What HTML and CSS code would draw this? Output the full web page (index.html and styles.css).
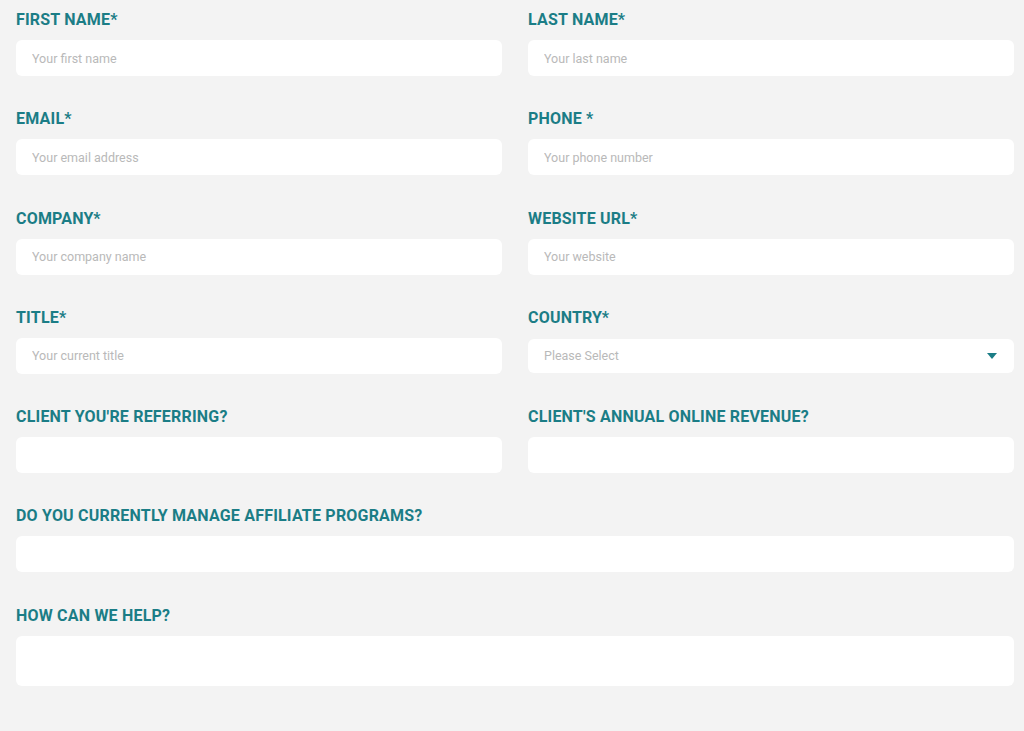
FILE: index.html
```html
<!DOCTYPE html>
<html lang="en">
<head>
    <meta charset="UTF-8">
    <title>Referral Form</title>
    <link rel="stylesheet" href="styles.css">
</head>
<body>
    <form class="referral-form">
        <div class="field">
            <label for="firstName">FIRST NAME*</label>
            <input type="text" id="firstName" placeholder="Your first name">
        </div>
        <div class="field">
            <label for="lastName">LAST NAME*</label>
            <input type="text" id="lastName" placeholder="Your last name">
        </div>
        <div class="field">
            <label for="email">EMAIL*</label>
            <input type="email" id="email" placeholder="Your email address">
        </div>
        <div class="field">
            <label for="phone">PHONE *</label>
            <input type="tel" id="phone" placeholder="Your phone number">
        </div>
        <div class="field">
            <label for="company">COMPANY*</label>
            <input type="text" id="company" placeholder="Your company name">
        </div>
        <div class="field">
            <label for="website">WEBSITE URL*</label>
            <input type="text" id="website" placeholder="Your website">
        </div>
        <div class="field">
            <label for="title">TITLE*</label>
            <input type="text" id="title" placeholder="Your current title">
        </div>
        <div class="field">
            <label for="country">COUNTRY*</label>
            <div class="select-wrap">
                <select id="country">
                    <option>Please Select</option>
                </select>
                <svg class="caret" width="10" height="6" viewBox="0 0 10 6"><path d="M0 0h10L5 6z" fill="#1b7d86"/></svg>
            </div>
        </div>
        <div class="field">
            <label for="client">CLIENT YOU'RE REFERRING?</label>
            <input type="text" id="client">
        </div>
        <div class="field">
            <label for="revenue">CLIENT'S ANNUAL ONLINE REVENUE?</label>
            <input type="text" id="revenue">
        </div>
        <div class="field wide">
            <label for="affiliate">DO YOU CURRENTLY MANAGE AFFILIATE PROGRAMS?</label>
            <input type="text" id="affiliate">
        </div>
        <div class="field wide">
            <label for="help">HOW CAN WE HELP?</label>
            <textarea id="help"></textarea>
        </div>
    </form>
</body>
</html>
```

FILE: styles.css
```css
body {
    margin: 0;
    background-color: #f3f3f3;
    font-family: Roboto, 'Liberation Sans', Arial, sans-serif;
}
.referral-form {
    display: grid;
    grid-template-columns: repeat(2, 1fr);
    column-gap: 26px;
    row-gap: 33.3px;
    padding: 10px 10px 0 16px;
}
.field {
    display: flex;
    flex-direction: column;
}
.field.wide {
    grid-column: 1 / 3;
}
.field label {
    font-size: 16px;
    line-height: 20px;
    font-weight: bold;
    letter-spacing: 0.2px;
    color: #1b7d86;
    margin-bottom: 10px;
}
.field input,
.field select,
.field textarea {
    box-sizing: border-box;
    height: 36px;
    border: none;
    border-radius: 6px;
    background-color: #fff;
    padding: 0 16px;
    font-family: Roboto, 'Liberation Sans', Arial, sans-serif;
    font-size: 12.5px;
    color: #555;
    outline: none;
}
.field input::placeholder {
    color: #b9b9b9;
}
.select-wrap {
    position: relative;
    margin-top: 1px;
}
.field select {
    width: 100%;
    height: 34px;
    appearance: none;
    color: #b9b9b9;
}
.caret {
    position: absolute;
    right: 17px;
    top: 14px;
}
.field textarea {
    height: 50px;
    resize: none;
    padding: 10px 16px;
}
```
